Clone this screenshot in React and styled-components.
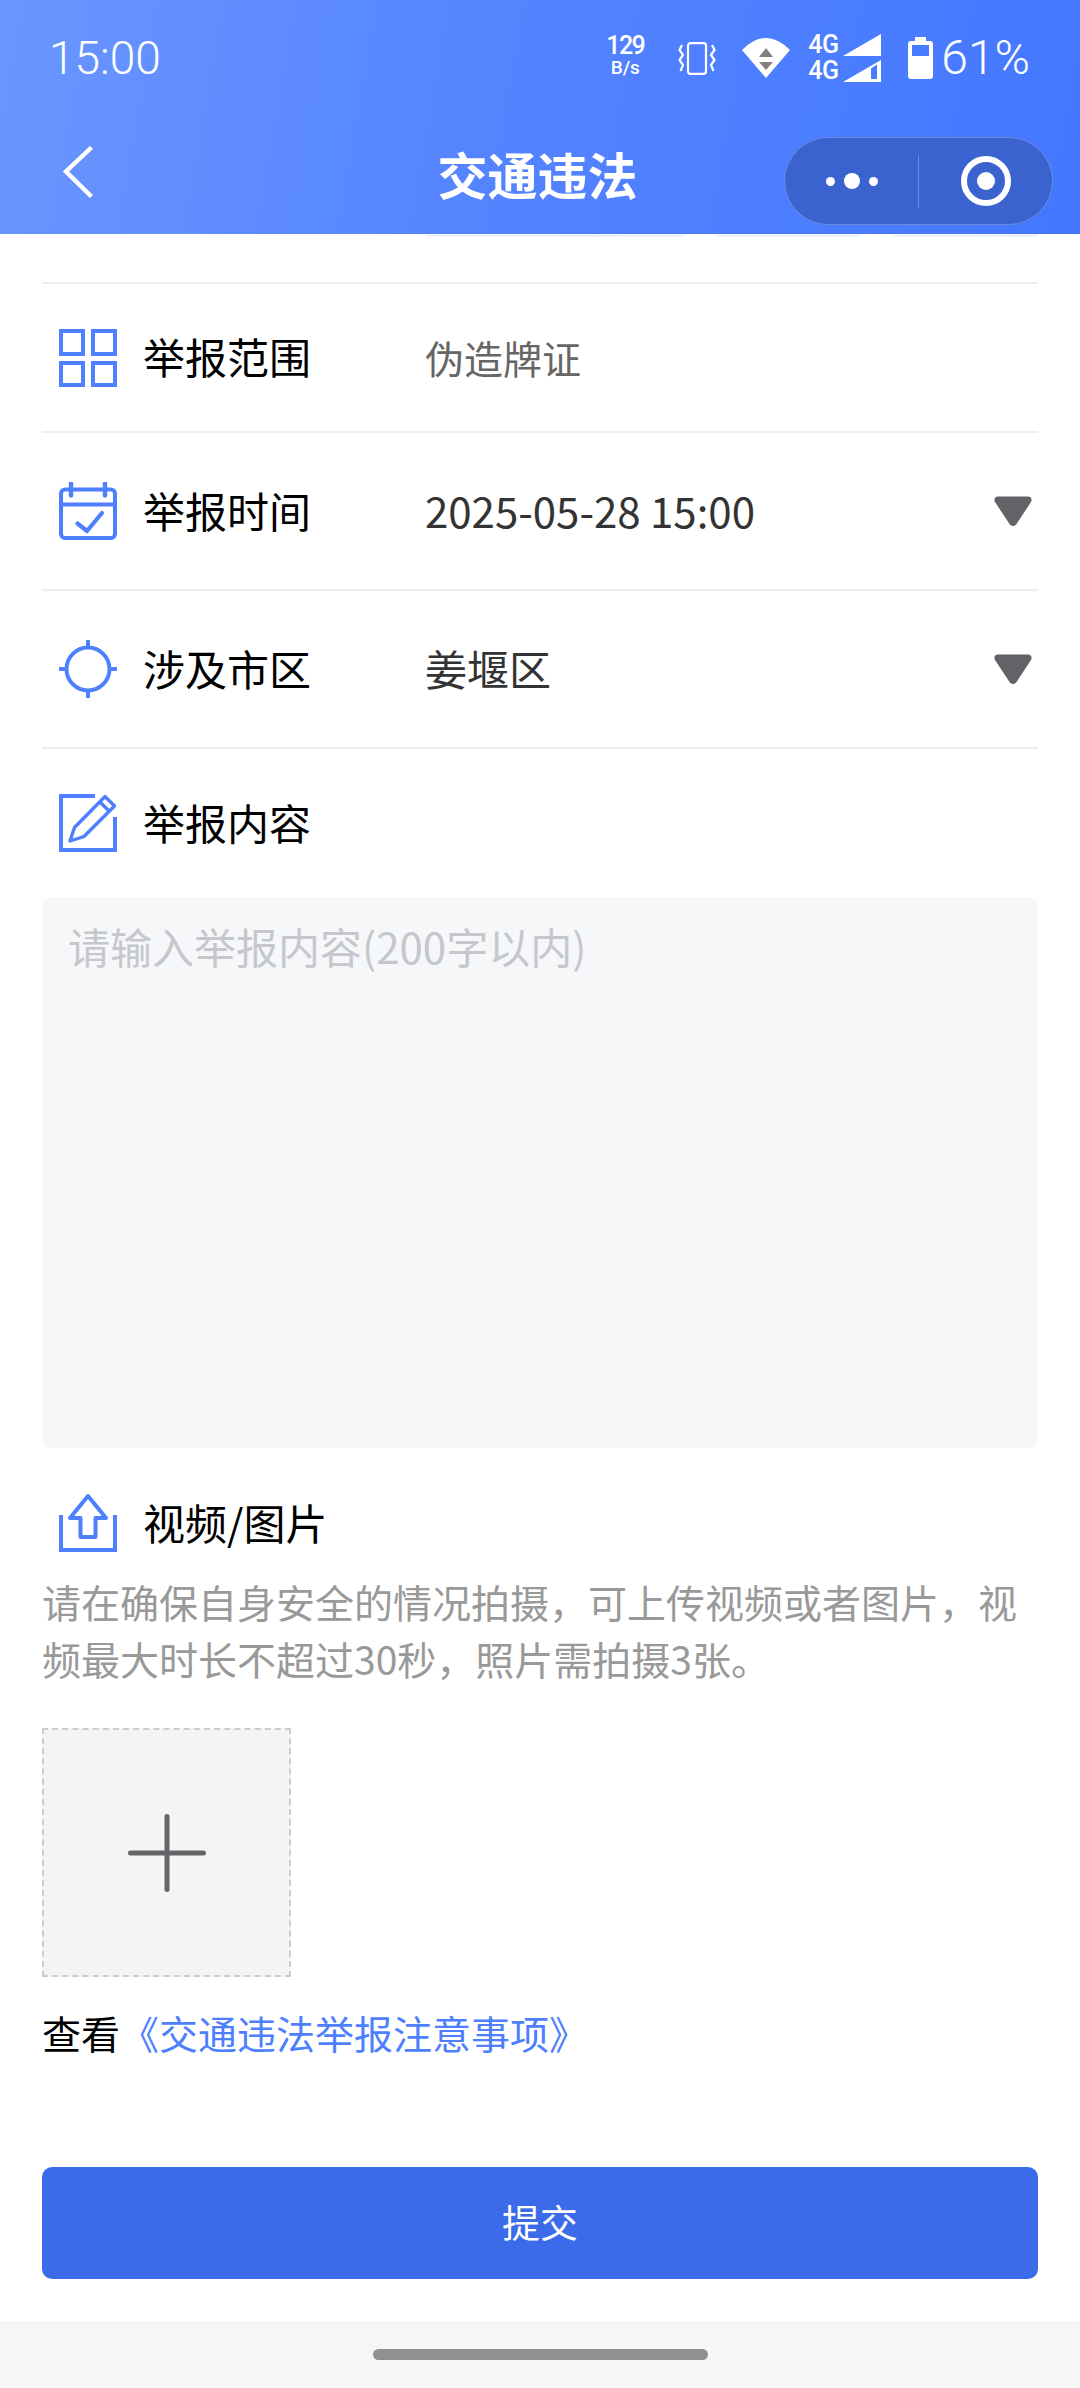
import React from 'react';
import styled, { createGlobalStyle } from 'styled-components';

const BLUE = '#4d7fff';

const GlobalStyle = createGlobalStyle`
  html, body {
    margin: 0;
    padding: 0;
    background: #fff;
  }
  * {
    box-sizing: border-box;
  }
`;

const GridIcon = () => (
  <svg width="58" height="58" viewBox="0 0 58 58" fill="none" stroke={BLUE} strokeWidth="4">
    <rect x="2" y="2" width="22" height="23" />
    <rect x="34" y="2" width="22" height="23" />
    <rect x="2" y="34" width="22" height="22" />
    <rect x="34" y="34" width="22" height="22" />
  </svg>
);

const CalendarIcon = () => (
  <svg width="58" height="58" viewBox="0 0 58 58" fill="none" stroke={BLUE} strokeWidth="4" strokeLinecap="round" strokeLinejoin="round">
    <rect x="2" y="7.5" width="54" height="48.5" rx="4" />
    <path d="M2 22.5H56" />
    <path d="M12 1.5V13.5M46 1.5V13.5" strokeWidth="4.4" />
    <path d="M18.5 41.5L28 49L43 31" strokeWidth="4.2" />
  </svg>
);

const TargetIcon = () => (
  <svg width="58" height="58" viewBox="0 0 58 58" fill="none" stroke={BLUE} strokeWidth="4">
    <circle cx="29" cy="29" r="21.5" />
    <path d="M29 0V8M29 50V58M0 29H8M50 29H58" />
  </svg>
);

const EditIcon = () => (
  <svg width="58" height="58" viewBox="0 0 58 58" fill="none" stroke={BLUE} strokeWidth="4">
    <path d="M36 2H2V56H56V23" />
    <path d="M11 47L15.5 33.5L46 2.5L55.5 12L25 42.5Z" strokeWidth="3.4" strokeLinejoin="round" />
    <path d="M41 8L50 17" strokeWidth="3.4" />
  </svg>
);

const UploadIcon = () => (
  <svg width="58" height="58" viewBox="0 0 58 58" fill="none" stroke={BLUE} strokeWidth="4">
    <path d="M2 21V56H56V21" />
    <path d="M29 2L11 24H21.5V43H36.5V24H47Z" strokeLinejoin="round" />
  </svg>
);

const Caret = () => (
  <svg width="38" height="30" viewBox="0 0 38 30" fill="#626366">
    <path d="M4 0.5H34C37 0.5 38.5 3.4 37 6L22.5 28C21 30.5 17 30.5 15.5 28L1 6C-0.5 3.4 1 0.5 4 0.5Z" />
  </svg>
);

const VibrateIcon = () => (
  <svg width="38" height="33" viewBox="0 0 38 33" fill="none" stroke="#fff" strokeWidth="2.2">
    <rect x="10" y="1.2" width="18" height="30.6" rx="2.5" />
    <path d="M4 3L1.5 8L5 13L1.5 18L5 23L2.5 29" />
    <path d="M34 3L36.5 8L33 13L36.5 18L33 23L35.5 29" />
  </svg>
);

const WifiIcon = () => (
  <svg width="48" height="40" viewBox="0 0 48 40">
    <path d="M0 12Q24 -12 48 12L24 40Z" fill="#fff" />
    <path d="M24 10L31 19H17Z" fill="#808080" />
    <path d="M17 24H31L24 32Z" fill="#808080" />
  </svg>
);

const SignalIcon = ({ hollow }) => (
  <svg width="38" height="22" viewBox="0 0 38 22">
    {hollow ? (
      <path fillRule="evenodd" d="M38 0V22H0ZM28 8.5V19H34V4.5Z" fill="#fff" />
    ) : (
      <path d="M38 0V22H0Z" fill="#fff" />
    )}
  </svg>
);

const BatteryIcon = () => (
  <svg width="25" height="42" viewBox="0 0 25 42">
    <path
      fillRule="evenodd"
      fill="#fff"
      d="M7 0H18V4H22C24 4 25 5 25 7V39C25 41 24 42 22 42H3C1 42 0 41 0 39V7C0 5 1 4 3 4H7ZM4 8V19H21V8Z"
    />
  </svg>
);

const BackIcon = () => (
  <svg width="30" height="52" viewBox="0 0 30 52" fill="none" stroke="#fff" strokeWidth="4.4">
    <path d="M28.5 1.5L3 25.5L28.5 50.5" />
  </svg>
);

const App = () => {
  return (
    <Page>
      <GlobalStyle />
      <Header>
        <StatusBar>
          <Clock>15:00</Clock>
          <StatusIcons>
            <Speed>
              <SpeedValue>129</SpeedValue>
              <SpeedUnit>B/s</SpeedUnit>
            </Speed>
            <StatusSlot gap={33}><VibrateIcon /></StatusSlot>
            <StatusSlot gap={26}><WifiIcon /></StatusSlot>
            <Network>
              <NetworkRow><NetworkLabel>4G</NetworkLabel><SignalIcon /></NetworkRow>
              <NetworkRow><NetworkLabel>4G</NetworkLabel><SignalIcon hollow /></NetworkRow>
            </Network>
            <StatusSlot gap={27}><BatteryIcon /></StatusSlot>
            <Percent>61%</Percent>
          </StatusIcons>
        </StatusBar>
        <NavBar>
          <BackButton><BackIcon /></BackButton>
          <Title>交通违法</Title>
          <Capsule>
            <MoreButton>
              <Dot size={9} />
              <Dot size={16} />
              <Dot size={9} />
            </MoreButton>
            <CapsuleLine />
            <CloseButton>
              <CloseRing>
                <CloseCore />
              </CloseRing>
            </CloseButton>
          </Capsule>
        </NavBar>
      </Header>

      <Peek>
        <PeekBit width={258} />
        <PeekBit width={145} />
        <PeekBit width={145} />
      </Peek>

      <Content>
        <FieldRow height={47} />
        <FieldRow height={149}>
          <IconBox><GridIcon /></IconBox>
          <Label>举报范围</Label>
          <Value muted>伪造牌证</Value>
        </FieldRow>
        <FieldRow height={158}>
          <IconBox><CalendarIcon /></IconBox>
          <Label>举报时间</Label>
          <Value>2025-05-28 15:00</Value>
          <CaretBox><Caret /></CaretBox>
        </FieldRow>
        <FieldRow height={158}>
          <IconBox><TargetIcon /></IconBox>
          <Label>涉及市区</Label>
          <Value>姜堰区</Value>
          <CaretBox><Caret /></CaretBox>
        </FieldRow>
        <FieldRow height={148} plain>
          <IconBox><EditIcon /></IconBox>
          <Label>举报内容</Label>
        </FieldRow>

        <TextBox>
          <Placeholder>请输入举报内容(200字以内)</Placeholder>
        </TextBox>

        <UploadRow>
          <IconBox><UploadIcon /></IconBox>
          <Label>视频/图片</Label>
        </UploadRow>
        <Hint>请在确保自身安全的情况拍摄，可上传视频或者图片，视频最大时长不超过30秒，照片需拍摄3张。</Hint>

        <AddBox>
          <svg width="78" height="78" viewBox="0 0 78 78" stroke="#646569" strokeWidth="5" strokeLinecap="round">
            <path d="M2.5 39H75.5M39 2.5V75.5" />
          </svg>
        </AddBox>

        <Notice>
          查看<NoticeLink>《交通违法举报注意事项》</NoticeLink>
        </Notice>

        <SubmitButton>提交</SubmitButton>
      </Content>

      <HomeBar>
        <HomePill />
      </HomeBar>
    </Page>
  );
};

export default App;

const Page = styled.div`
  display: flex;
  flex-direction: column;
  width: 1080px;
  height: 2388px;
  overflow: hidden;
  background: #fff;
  font-family: 'Noto Sans CJK SC', 'Noto Sans', sans-serif;
`;

const Header = styled.div`
  height: 234px;
  flex: 0 0 234px;
  background: linear-gradient(100deg, #6a96ff 0%, #5584ff 45%, #4377ff 100%);
  color: #fff;
`;

const StatusBar = styled.div`
  display: flex;
  align-items: center;
  justify-content: space-between;
  height: 110px;
  padding: 6px 50px 0 49px;
  font-family: Roboto, 'Liberation Sans', sans-serif;
`;

const Clock = styled.div`
  font-size: 46px;
  font-weight: 300;
  line-height: 1;
`;

const StatusIcons = styled.div`
  display: flex;
  align-items: center;
`;

const Speed = styled.div`
  display: flex;
  flex-direction: column;
  align-items: center;
  width: 40px;
  margin-top: -4px;
  font-weight: 500;
`;

const SpeedValue = styled.div`
  font-size: 25px;
  letter-spacing: -1.5px;
  line-height: 24px;
`;

const SpeedUnit = styled.div`
  font-size: 19px;
  line-height: 20px;
`;

const StatusSlot = styled.div`
  display: flex;
  margin-left: ${(p) => p.gap}px;
`;

const Network = styled.div`
  display: flex;
  flex-direction: column;
  gap: 4px;
  margin-left: 18px;
`;

const NetworkRow = styled.div`
  display: flex;
  align-items: flex-end;
  width: 73px;
  justify-content: space-between;
`;

const NetworkLabel = styled.div`
  font-size: 25px;
  font-weight: 500;
  line-height: 22px;
  letter-spacing: -0.5px;
`;

const Percent = styled.div`
  margin-left: 8px;
  font-size: 48px;
  font-weight: 300;
  line-height: 1;
`;

const NavBar = styled.div`
  display: grid;
  grid-template-columns: 1fr auto 1fr;
  align-items: start;
  height: 124px;
`;

const BackButton = styled.div`
  display: flex;
  padding: 36px 0 0 63px;
`;

const Title = styled.div`
  margin: 33px 5px 0 0;
  font-size: 50px;
  font-weight: 700;
  line-height: 60px;
`;

const Capsule = styled.div`
  display: flex;
  align-items: center;
  justify-self: end;
  width: 269px;
  height: 88px;
  margin: 27px 27px 0 0;
  border: 1px solid #6a8ce0;
  border-radius: 44px;
  background: #3a63cf;
`;

const MoreButton = styled.div`
  display: flex;
  align-items: center;
  justify-content: center;
  gap: 9px;
  width: 133px;
`;

const Dot = styled.span`
  width: ${(p) => p.size}px;
  height: ${(p) => p.size}px;
  border-radius: 50%;
  background: #fff;
`;

const CapsuleLine = styled.div`
  width: 1px;
  height: 53px;
  background: #6a8ce0;
`;

const CloseButton = styled.div`
  display: flex;
  flex: 1;
  align-items: center;
  justify-content: center;
`;

const CloseRing = styled.div`
  display: flex;
  align-items: center;
  justify-content: center;
  width: 50px;
  height: 50px;
  border: 6px solid #fff;
  border-radius: 50%;
`;

const CloseCore = styled.div`
  width: 18px;
  height: 18px;
  border-radius: 50%;
  background: #fff;
`;

const Peek = styled.div`
  display: flex;
  justify-content: flex-end;
  gap: 32px;
  height: 3px;
  padding-right: 42px;
`;

const PeekBit = styled.div`
  width: ${(p) => p.width}px;
  background: #eef3ff;
`;

const Content = styled.div`
  display: flex;
  flex-direction: column;
  flex: 1;
  padding: 0 42px;
`;

const FieldRow = styled.div`
  display: flex;
  align-items: center;
  flex: 0 0 ${(p) => p.height}px;
  height: ${(p) => p.height}px;
  padding-left: 17px;
  border-bottom: ${(p) => (p.plain ? 'none' : '2px solid #eeeeee')};
`;

const IconBox = styled.div`
  display: flex;
  flex: 0 0 58px;
  width: 58px;
  height: 58px;
`;

const Label = styled.div`
  flex: 0 0 308px;
  padding: 0 0 3px 26px;
  color: #000;
  font-size: 42px;
  line-height: 60px;
`;

const Value = styled.div`
  padding-bottom: 2px;
  color: ${(p) => (p.muted ? '#666666' : '#333333')};
  font-size: ${(p) => (p.muted ? 39 : 42)}px;
  line-height: 60px;
`;

const CaretBox = styled.div`
  display: flex;
  margin: 0 6px 0 auto;
`;

const TextBox = styled.div`
  flex: 0 0 551px;
  padding: 19px 26px;
  border-radius: 10px;
  background: #f6f7f9;
`;

const Placeholder = styled.div`
  color: #c5c7cc;
  font-size: 42px;
  line-height: 60px;
`;

const UploadRow = styled.div`
  display: flex;
  align-items: center;
  height: 80px;
  margin-top: 35px;
  padding-left: 17px;
`;

const Hint = styled.div`
  margin-top: 10px;
  color: #999999;
  font-size: 39px;
  line-height: 57px;
`;

const AddBox = styled.div`
  display: flex;
  align-items: center;
  justify-content: center;
  width: 249px;
  height: 249px;
  margin-top: 41px;
  border: 2px dashed #cccccc;
  background: #f4f4f4;
`;

const Notice = styled.div`
  margin-top: 25px;
  color: #000;
  font-size: 39px;
  line-height: 60px;
`;

const NoticeLink = styled.span`
  color: ${BLUE};
`;

const SubmitButton = styled.div`
  display: flex;
  align-items: center;
  justify-content: center;
  height: 112px;
  margin-top: 105px;
  padding-bottom: 5px;
  border-radius: 10px;
  background: #3b6be8;
  color: #fff;
  font-size: 38px;
`;

const HomeBar = styled.div`
  display: flex;
  justify-content: center;
  flex: 0 0 67px;
  padding-top: 28px;
  background: #f6f6f6;
`;

const HomePill = styled.div`
  width: 335px;
  height: 11px;
  border-radius: 6px;
  background: #909090;
`;
